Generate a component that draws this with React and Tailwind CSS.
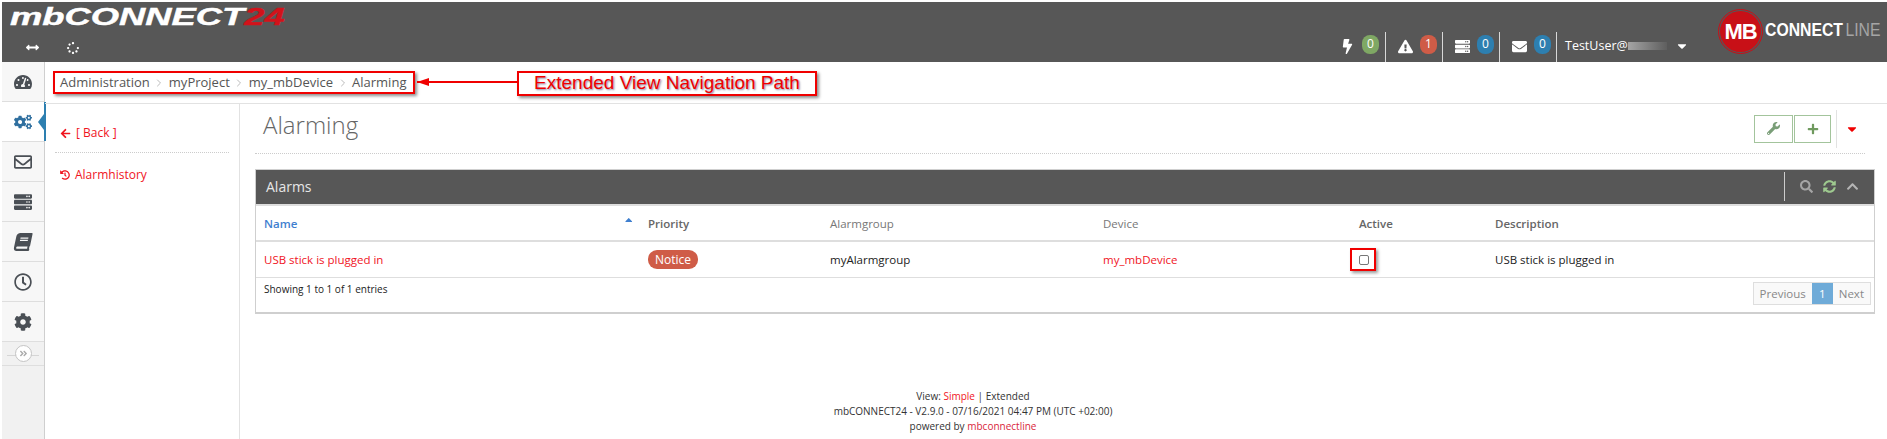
import {
  FaArrowLeft, FaArrowsAltH, FaBolt, FaBook, FaCaretDown, FaCaretUp, FaChevronUp, FaCog, FaCogs, FaEnvelope,
  FaExclamationTriangle, FaHistory, FaPlus, FaRegClock, FaRegEnvelope, FaSearch, FaServer, FaSpinner,
  FaSyncAlt, FaTachometerAlt, FaWrench, FaAngleDoubleRight,
} from 'react-icons/fa';
import { FiChevronRight } from 'react-icons/fi';

const sideItems = [
  { icon: FaTachometerAlt },
  { icon: FaCogs, active: true },
  { icon: FaRegEnvelope },
  { icon: FaServer },
  { icon: FaBook, tilt: true },
  { icon: FaRegClock },
  { icon: FaCog },
];

const crumbs = ['Administration', 'myProject', 'my_mbDevice', 'Alarming'];

function Stat({ icon: Icon, count, color, first }) {
  return (
    <div className={`flex h-[30px] w-[57px] items-center pl-[11px] ${first ? '' : 'border-l border-[#d8d8d8]'}`}>
      <span className="mb-[2px] flex w-[16px] justify-center text-[15px] text-white"><Icon /></span>
      <span className={`mb-[6px] ml-[7px] flex h-[19px] w-[17px] items-center justify-center rounded-[8px] text-[12px] text-white ${color}`}>{count}</span>
    </div>
  );
}

export default function App() {
  return (
    <div className="h-[439px] w-[1887px] overflow-hidden bg-white pl-[2px] pt-[2px] font-['Open_Sans',sans-serif] text-[12px] text-[#222]">
      {/* top bar */}
      <header className="flex h-[60px] bg-[#575757]">
        <div className="w-[320px] pl-[8px]">
          <div className="h-[39px] origin-left scale-x-[1.58] pt-[3px] font-['Liberation_Sans',sans-serif] text-[23px] font-bold italic leading-[24px] text-white [-webkit-text-stroke:0.4px_currentColor]">
            mbCONNECT<span className="text-[#d2121a]">24</span>
          </div>
          <div className="flex items-center gap-[28px] pl-[16px] text-white">
            <FaArrowsAltH className="text-[13px]" />
            <FaSpinner className="text-[12px]" />
          </div>
        </div>
        <div className="ml-auto flex items-end">
          <Stat icon={FaBolt} count="0" color="bg-[#7fa864]" first />
          <Stat icon={FaExclamationTriangle} count="1" color="bg-[#cf5c47]" />
          <Stat icon={FaServer} count="0" color="bg-[#2d7fb0]" />
          <Stat icon={FaEnvelope} count="0" color="bg-[#2d7fb0]" />
          <div className="flex h-[30px] w-[162px] items-center border-l border-[#d8d8d8] pb-[2px] pl-[8px] text-[12.5px] text-white">
            TestUser@
            <span className="h-[8px] w-[39px] bg-gradient-to-r from-[#a5a5a5] to-[#5f5f5f]" />
            <FaCaretDown className="ml-[8px] text-[14px]" />
          </div>
        </div>
        <div className="flex w-[169px] items-center pb-[1px]">
          <div className="h-[45px] w-[45px] shrink-0 rounded-full border border-[#c81017] p-[1px]">
            <div className="flex h-full w-full items-center justify-center rounded-full bg-[#c81017] font-['Liberation_Sans',sans-serif] text-[22px] font-bold tracking-[-1px] text-white">
              MB
            </div>
          </div>
          <span className="ml-[2px] origin-left scale-x-[0.83] whitespace-nowrap pb-[2px] font-['Liberation_Sans',sans-serif] text-[19px] font-bold text-white">
            CONNECT<span className="ml-[3px] font-normal text-[#a5a5a5]">LINE</span>
          </span>
        </div>
      </header>

      <div className="flex h-[377px]">
        {/* icon rail */}
        <nav className="w-[43px] shrink-0 border-r border-[#cfcfcf] bg-[#f1f1f1]">
          {sideItems.map(({ icon: Icon, active, tilt }, i) => (
            <div
              key={i}
              className={`relative flex h-[40px] items-center justify-center border-b border-[#dedede] text-[18px] ${active ? 'bg-white text-[#2f6f9f]' : 'bg-[#f7f7f7] text-[#4a4f55]'}`}
            >
              <Icon className={tilt ? '-skew-x-12' : ''} />
              {active && (
                <>
                  <span className="absolute right-[-2px] top-0 h-full w-[2px] bg-[#2d7fb0]" />
                  <span className="absolute right-0 top-[12px] h-0 w-0 border-y-[8px] border-r-[6px] border-y-transparent border-r-[#2d7fb0]" />
                </>
              )}
            </div>
          ))}
          <div className="relative flex h-[24px] items-center justify-center border-b border-[#dedede] bg-[#f1f1f1]">
            <span className="absolute left-[5px] right-[5px] top-[13px] h-px bg-[#d5d5d5]" />
            <span className="relative flex h-[17px] w-[17px] items-center justify-center rounded-full border border-[#c4c4c4] bg-white text-[9px] text-[#aaa]">
              <FaAngleDoubleRight />
            </span>
          </div>
        </nav>

        <div className="relative min-w-0 flex-1">
          {/* breadcrumb */}
          <div className="flex h-[42px] items-center border-b border-[#e2e2e2] pl-[15px] text-[13px] text-[#555]">
            {crumbs.map((c, i) => (
              <span key={c} className="flex items-center">
                {i > 0 && <span className="flex w-[19px] justify-center text-[12px] text-[#bbb]"><FiChevronRight /></span>}
                {c}
              </span>
            ))}
          </div>

          {/* annotation */}
          <div className="absolute left-[8px] top-[9px] h-[23px] w-[362px] border-2 border-[#f00000] shadow-[2px_2px_3px_rgba(0,0,0,0.45)]" />
          <div className="absolute left-[372px] top-[19px] h-[2px] w-[100px] bg-[#f00000]" />
          <div className="absolute left-[372px] top-[16px] h-0 w-0 border-y-[4px] border-r-[12px] border-y-transparent border-r-[#f00000]" />
          <div className="absolute left-[472px] top-[9px] flex h-[25px] w-[300px] items-center justify-center border-2 border-[#f00000] bg-white font-['Liberation_Sans',sans-serif] text-[19px] text-[#f00000] shadow-[2px_2px_3px_rgba(0,0,0,0.45)] [text-shadow:1px_1px_2px_rgba(0,0,60,0.5)]">
            Extended View Navigation Path
          </div>

          <div className="flex h-[335px]">
            {/* left menu */}
            <aside className="w-[195px] shrink-0 border-r border-[#e2e2e2] px-[10px] text-[12px] text-[#f0141e]">
              <div className="flex h-[49px] items-center gap-[5px] border-b border-dotted border-[#ccc] pl-[5px] pt-[10px]">
                <FaArrowLeft className="text-[11px]" /> [ Back ]
              </div>
              <div className="flex h-[41px] items-center gap-[5px] pl-[5px] pt-[2px]">
                <FaHistory className="text-[10px]" /> Alarmhistory
              </div>
            </aside>

            {/* main */}
            <main className="min-w-0 flex-1 pl-[15px] pr-[12px]">
              <div className="mr-[10px] flex h-[50px] items-center border-b border-dotted border-[#ccc]">
                <h1 className="pb-[8px] pl-[8px] text-[24px] font-light leading-none text-[#666]">Alarming</h1>
                <div className="ml-auto flex items-center">
                  <button className="flex h-[28px] w-[39px] items-center justify-center border border-[#a3c49c] text-[13px] text-[#7a9e78]"><FaWrench /></button>
                  <button className="ml-[1px] flex h-[28px] w-[37px] items-center justify-center border border-[#a3c49c] text-[12px] text-[#6f9a5f]"><FaPlus /></button>
                  <div className="ml-[5px] flex h-[38px] w-[29px] items-center justify-center border-l border-[#e2e2e2] pl-[2px] text-[14px] text-[#f00000]"><FaCaretDown /></div>
                </div>
              </div>

              {/* alarms panel */}
              <section className="relative mt-[15px] border border-b-2 border-[#cfcfcf]">
                <div className="flex h-[36px] items-center border-b-2 border-[#dedede] bg-[#575757] pb-[1px] pl-[10px] text-[14px] text-[#e6e6e6]">
                  Alarms
                  <div className="ml-auto flex h-[29px] items-center gap-[10px] border-l border-[#ccc] pl-[15px] pr-[15px] text-[13px]">
                    <FaSearch className="text-[#a5a5a5]" />
                    <FaSyncAlt className="text-[#9ec98f]" />
                    <FaChevronUp className="text-[#b5b5b5]" />
                  </div>
                </div>

                <div className="grid h-[36px] grid-cols-[384px_182px_273px_256px_136px_1fr] items-center border-b-2 border-[#dedede] pl-[8px] pt-[2px] text-[11.5px] text-[#666]">
                  <span className="relative font-semibold text-[#3f7fcf]">
                    Name
                    <FaCaretUp className="absolute right-[14px] top-[-1px] text-[#3f7fcf]" />
                  </span>
                  <span className="font-semibold">Priority</span>
                  <span className="text-[#777]">Alarmgroup</span>
                  <span className="text-[#777]">Device</span>
                  <span className="font-semibold">Active</span>
                  <span className="font-semibold">Description</span>
                </div>

                <div className="grid h-[36px] grid-cols-[384px_182px_273px_256px_136px_1fr] items-center border-b border-[#dedede] pl-[8px] text-[11.5px]">
                  <span className="text-[#f0141e]">USB stick is plugged in</span>
                  <span><span className="flex h-[19px] w-[50px] items-center justify-center rounded-[9px] bg-[#cf5c47] text-[12px] text-white">Notice</span></span>
                  <span>myAlarmgroup</span>
                  <span className="text-[#f0141e]">my_mbDevice</span>
                  <span className="relative">
                    <span className="block h-[10px] w-[10px] rounded-[2px] border border-[#777]" />
                    <span className="absolute left-[-9px] top-[-7px] h-[23px] w-[26px] border-2 border-[#f00000] shadow-[2px_2px_3px_rgba(0,0,0,0.4)]" />
                  </span>
                  <span>USB stick is plugged in</span>
                </div>

                <div className="flex h-[34px] items-start justify-between pl-[8px] pr-[3px] pt-[4px]">
                  <span className="text-[10px]">Showing 1 to 1 of 1 entries</span>
                  <div className="flex h-[23px] border border-[#dedede] text-[11.5px] text-[#888]">
                    <span className="flex items-center bg-[#f9f9f9] px-[6px]">Previous</span>
                    <span className="flex w-[21px] items-center justify-center bg-[#6fabd8] text-white">1</span>
                    <span className="flex items-center bg-[#f9f9f9] px-[6px]">Next</span>
                  </div>
                </div>
              </section>

              {/* footer */}
              <footer className="mt-[75px] pr-[184px] text-center text-[10px] leading-[15px] text-[#333]">
                <div>View: <span className="text-[#f0141e]">Simple</span> | Extended</div>
                <div>mbCONNECT24 - V2.9.0 - 07/16/2021 04:47 PM (UTC +02:00)</div>
                <div>powered by <span className="text-[#d9263b]">mbconnectline</span></div>
              </footer>
            </main>
          </div>
        </div>
      </div>
    </div>
  );
}
